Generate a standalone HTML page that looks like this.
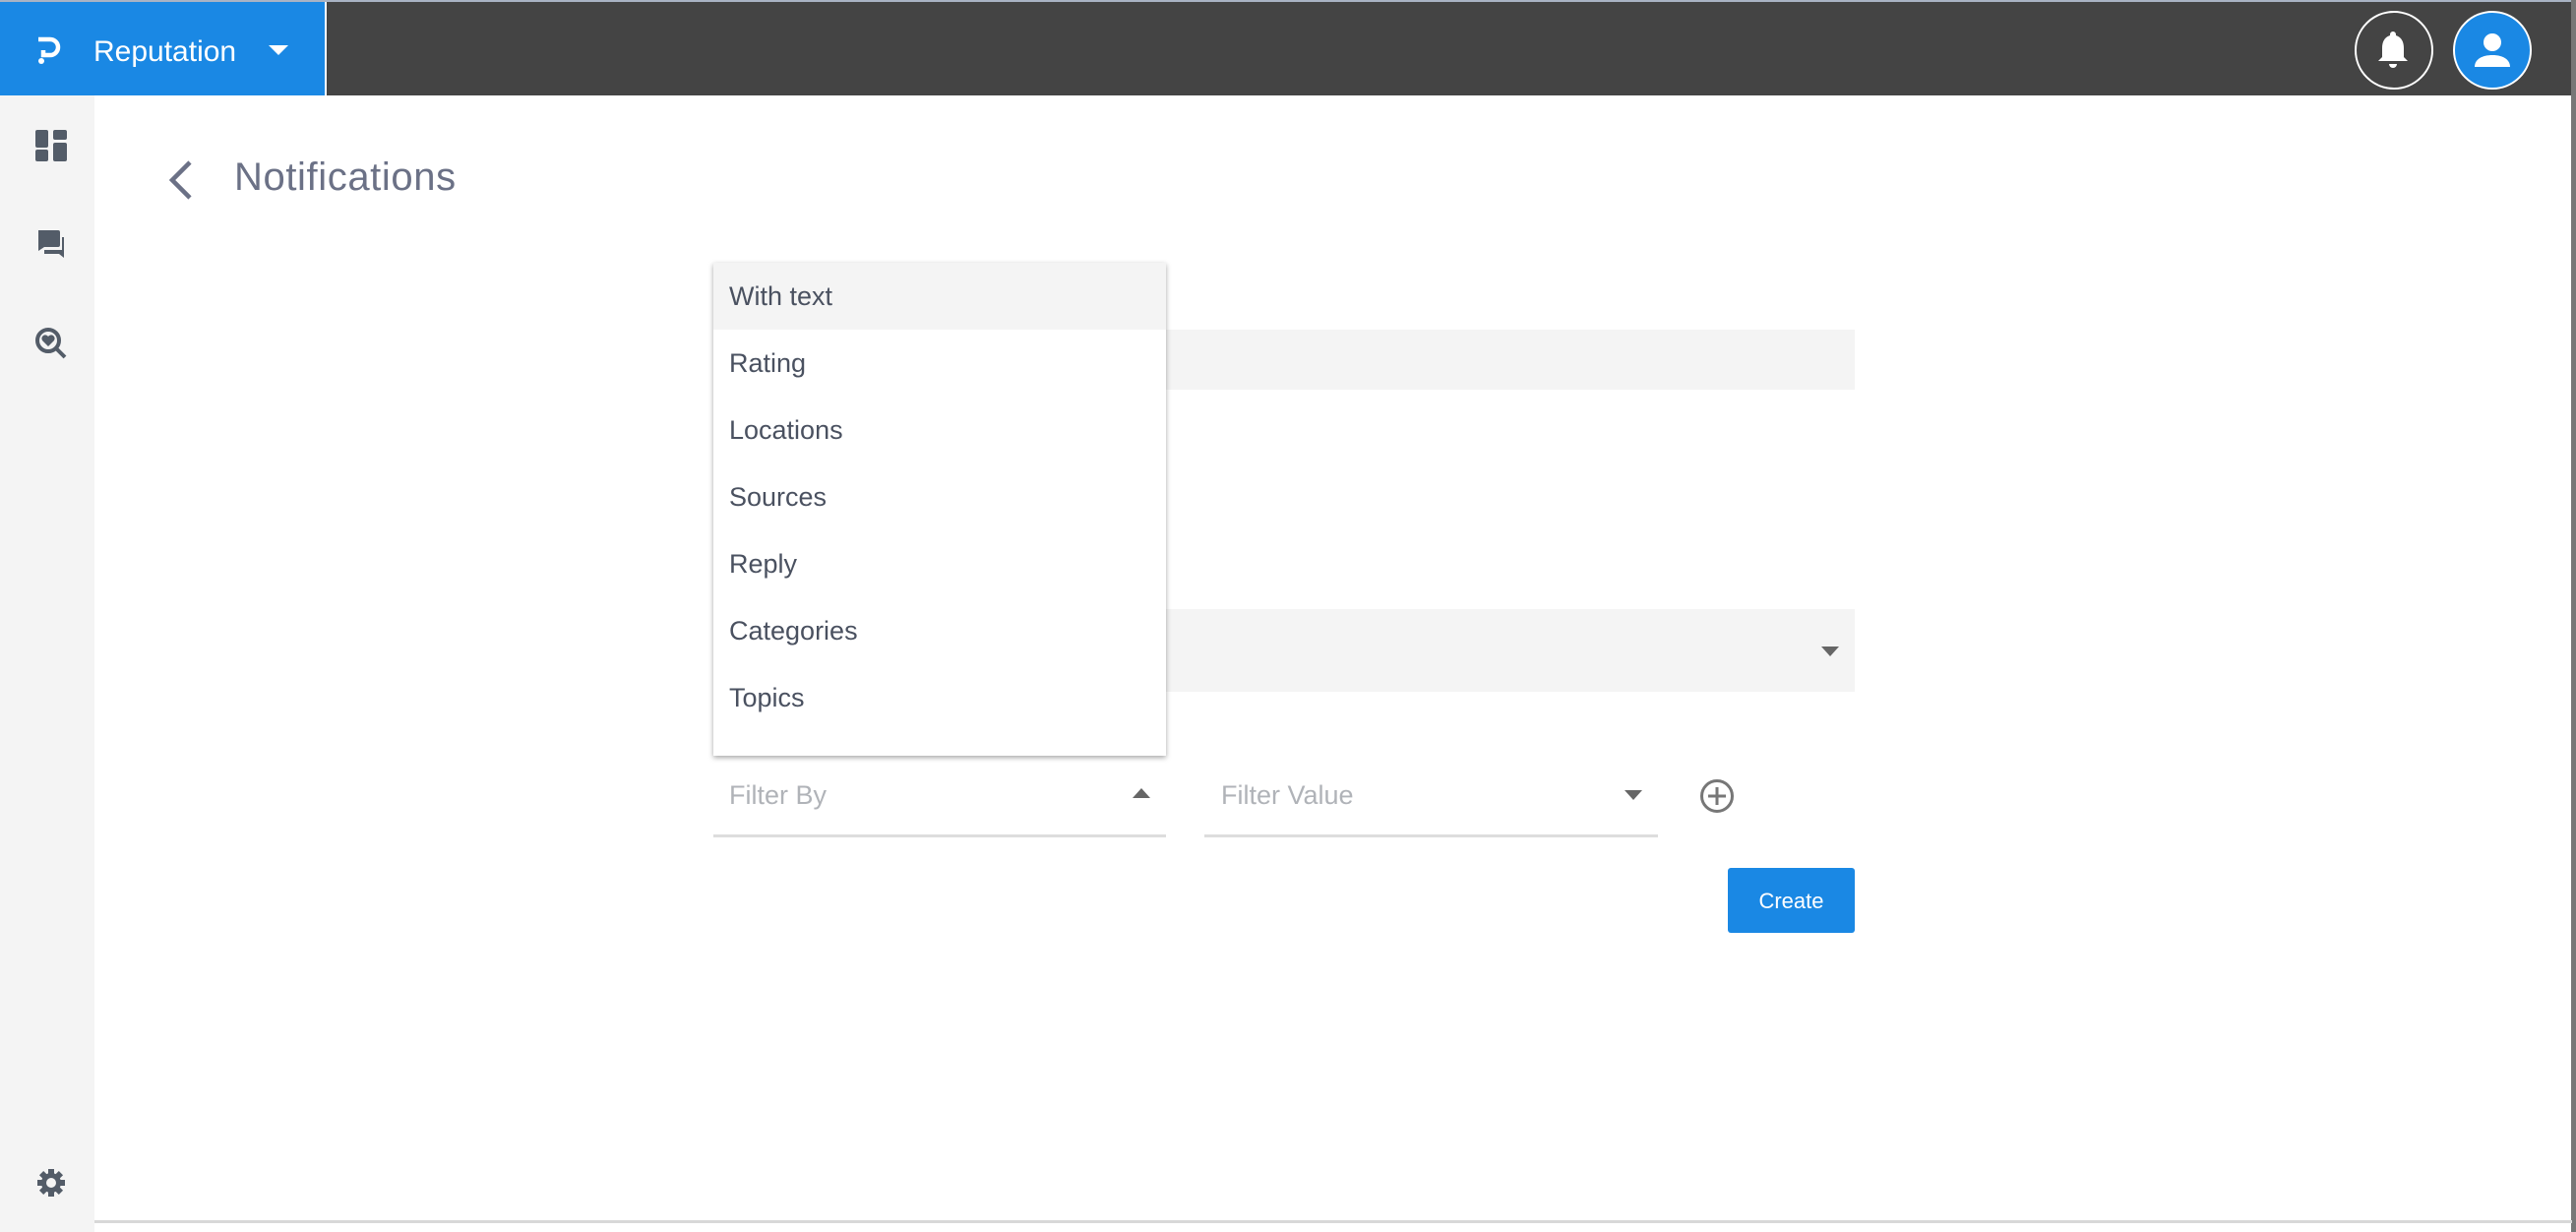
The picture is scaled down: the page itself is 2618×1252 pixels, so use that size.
<!DOCTYPE html>
<html><head><meta charset="utf-8"><style>
*{margin:0;padding:0;box-sizing:border-box}
body{width:2618px;height:1252px;overflow:hidden;background:#fff;font-family:"Liberation Sans",sans-serif;position:relative}
.abs{position:absolute}
.item{position:absolute;left:0;width:460px;height:68px;font-size:27px;color:#4a5160;padding-left:16px;line-height:68px}
</style></head><body>
<div class="abs" style="left:0;top:0;width:2618px;height:2px;background:#a9b3c4"></div>
<div class="abs" style="left:0;top:2px;width:2614px;height:95px;background:#444"></div>
<div class="abs" style="left:0;top:2px;width:330px;height:95px;background:#1a88e4"></div>
<div class="abs" style="left:330px;top:2px;width:2px;height:95px;background:#fff"></div>
<svg class="abs" style="left:37px;top:36px" width="26" height="30" viewBox="0 0 26 30"><path d="M2 4 H14 A8 8 0 0 1 14 20 H7 V15" fill="none" stroke="#fff" stroke-width="4.5"/><circle cx="5" cy="26" r="3" fill="#fff"/></svg>
<div class="abs" style="left:95px;top:36px;font-size:30px;color:#fff">Reputation</div>
<svg class="abs" style="left:273px;top:46px" width="20" height="11"><path d="M0 0H20L10 10Z" fill="#fff"/></svg>
<div class="abs" style="left:2393px;top:11px;width:80px;height:80px;border:2px solid #fff;border-radius:50%"></div>
<svg class="abs" style="left:2415px;top:31px" width="34" height="40" viewBox="0 0 34 40"><path d="M17 1a3 3 0 0 1 3 3v1c6 2 8 7 8 13v9l4 4H2l4-4v-9c0-6 2-11 8-13V4a3 3 0 0 1 3-3z" fill="#fff"/><path d="M13 34h8a4 4 0 0 1-8 0z" fill="#fff"/></svg>
<div class="abs" style="left:2493px;top:11px;width:80px;height:80px;border:2px solid #fff;border-radius:50%;background:#1a88e4"></div>
<svg class="abs" style="left:2513px;top:31px" width="40" height="40" viewBox="0 0 40 40"><circle cx="20" cy="12" r="9" fill="#fff"/><path d="M2 37c0-8 8-12 18-12s18 4 18 12z" fill="#fff"/></svg>
<div class="abs" style="left:2613px;top:0;width:5px;height:1252px;background:#777"></div>
<div class="abs" style="left:0;top:97px;width:96px;height:1155px;background:#f4f4f4"></div>
<svg class="abs" style="left:36px;top:132px" width="32" height="32"><rect x="0" y="0" width="13" height="18" rx="2" fill="#535c68"/><rect x="0" y="20" width="13" height="12" rx="2" fill="#535c68"/><rect x="18" y="0" width="14" height="10" rx="2" fill="#535c68"/><rect x="18" y="13" width="14" height="19" rx="2" fill="#535c68"/></svg>
<svg class="abs" style="left:37px;top:234px" width="30" height="30"><path d="M2 0h20a2 2 0 0 1 2 2v13a2 2 0 0 1-2 2H8l-6 4z" fill="#535c68"/><path d="M26 7h2v21l-5-4H8v-4h18z" fill="#535c68"/></svg>
<svg class="abs" style="left:35px;top:332px" width="34" height="34"><circle cx="14" cy="14" r="11" fill="none" stroke="#535c68" stroke-width="4"/><path d="M22 22l9 9" stroke="#535c68" stroke-width="4"/><path d="M14 20l-6-6a3 3 0 0 1 6-4a3 3 0 0 1 6 4z" fill="#535c68"/></svg>
<svg class="abs" style="left:37px;top:1187px" width="30" height="30" viewBox="0 0 30 30"><g fill="#535c68"><circle cx="15" cy="15" r="10"/><rect x="12" y="1" width="6" height="28"/><rect x="1" y="12" width="28" height="6"/><rect x="12" y="1" width="6" height="28" transform="rotate(45 15 15)"/><rect x="12" y="1" width="6" height="28" transform="rotate(-45 15 15)"/></g><circle cx="15" cy="15" r="5" fill="#f4f4f4"/></svg>
<div class="abs" style="left:96px;top:1240px;width:2518px;height:3px;background:#d8d8d8"></div>
<svg class="abs" style="left:169px;top:163px" width="28" height="40"><path d="M24 2L6 20l18 18" fill="none" stroke="#6b7186" stroke-width="4.5"/></svg>
<div class="abs" style="left:238px;top:158px;font-size:40px;color:#6b7186;letter-spacing:0.6px">Notifications</div>
<div class="abs" style="left:1185px;top:335px;width:700px;height:61px;background:#f4f4f4"></div>
<div class="abs" style="left:1185px;top:619px;width:700px;height:84px;background:#f4f4f4"></div>
<svg class="abs" style="left:1851px;top:657px" width="18" height="10"><path d="M0 0H18L9 10Z" fill="#666"/></svg>
<div class="abs" style="left:725px;top:267px;width:460px;height:501px;background:#fff;box-shadow:0 2px 5px rgba(0,0,0,.35)">
<div class="item" style="top:0;background:#f4f4f4">With text</div>
<div class="item" style="top:68px">Rating</div>
<div class="item" style="top:136px">Locations</div>
<div class="item" style="top:204px">Sources</div>
<div class="item" style="top:272px">Reply</div>
<div class="item" style="top:340px">Categories</div>
<div class="item" style="top:408px">Topics</div>
</div>
<div class="abs" style="left:741px;top:793px;font-size:27px;color:#b0b3b8">Filter By</div>
<svg class="abs" style="left:1151px;top:801px" width="18" height="10"><path d="M0 10H18L9 0Z" fill="#666"/></svg>
<div class="abs" style="left:725px;top:848px;width:460px;height:3px;background:#ddd"></div>
<div class="abs" style="left:1241px;top:793px;font-size:27px;color:#b0b3b8">Filter Value</div>
<svg class="abs" style="left:1651px;top:803px" width="18" height="10"><path d="M0 0H18L9 10Z" fill="#666"/></svg>
<div class="abs" style="left:1224px;top:848px;width:461px;height:3px;background:#ddd"></div>
<svg class="abs" style="left:1727px;top:791px" width="36" height="36"><circle cx="18" cy="18" r="15.5" fill="none" stroke="#777" stroke-width="3"/><path d="M18 9v18M9 18h18" stroke="#777" stroke-width="3"/></svg>
<div class="abs" style="left:1756px;top:882px;width:129px;height:66px;background:#1a88e4;border-radius:3px;color:#fff;font-size:22px;text-align:center;line-height:68px">Create</div>
</body></html>
